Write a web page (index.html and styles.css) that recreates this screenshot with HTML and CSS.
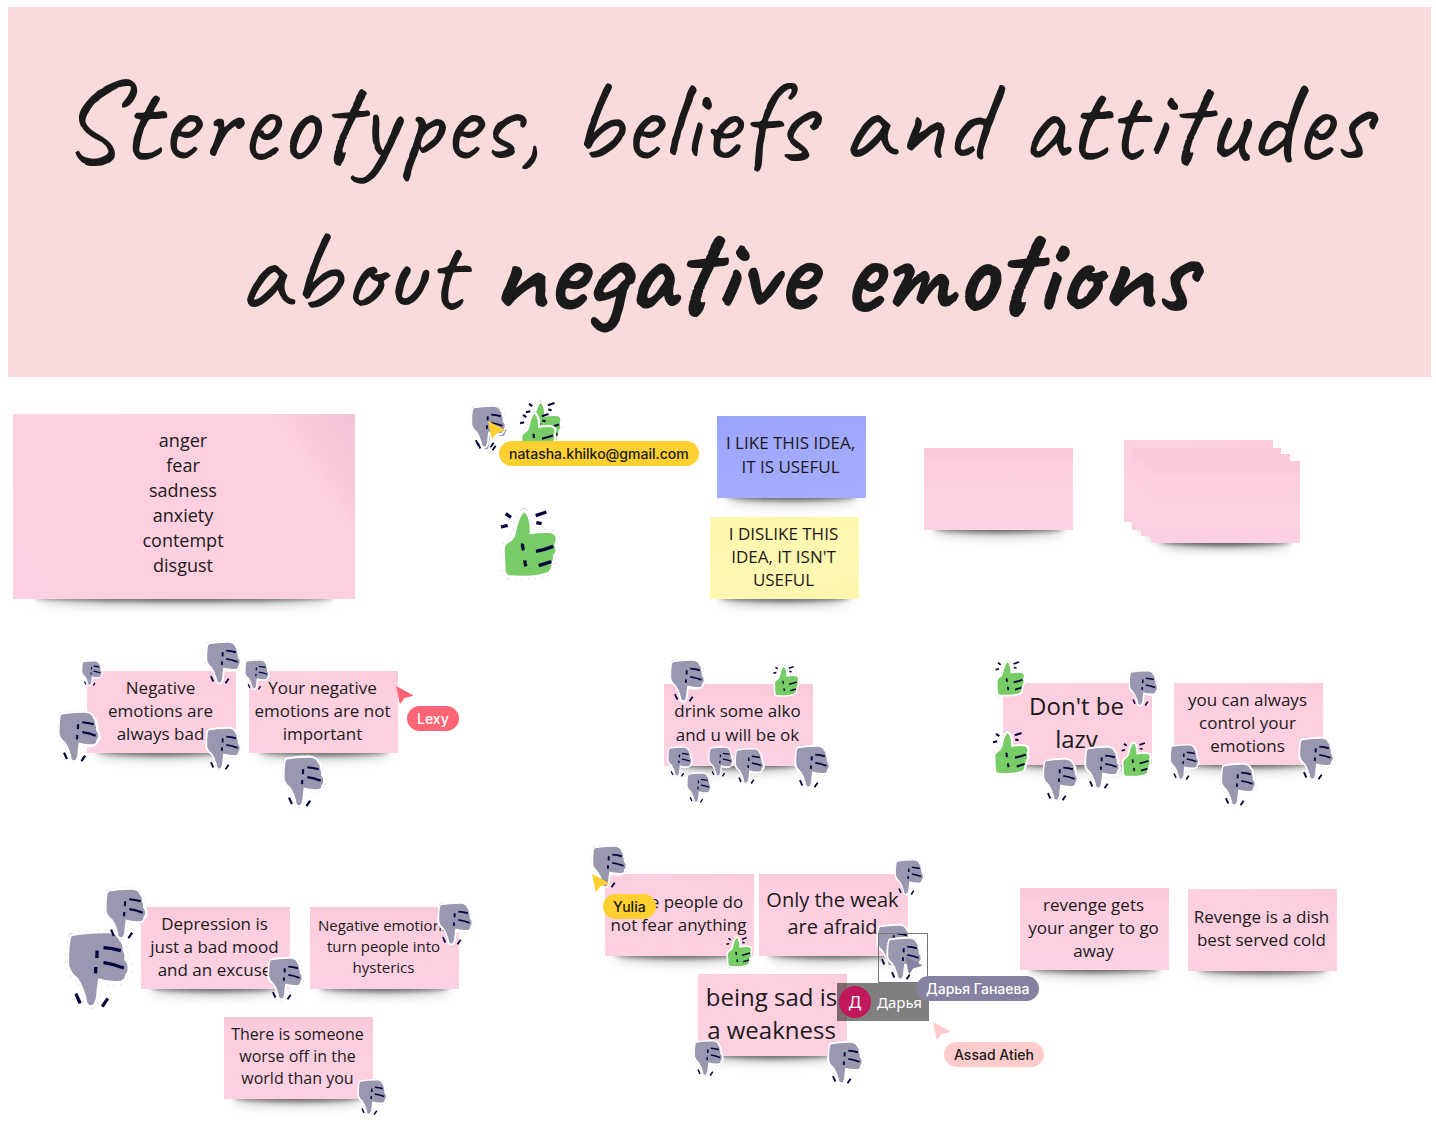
FILE: index.html
```html
<!DOCTYPE html>
<html lang="en">
<head>
<meta charset="utf-8">
<meta name="viewport" content="width=device-width, initial-scale=1">
<title>Stereotypes, beliefs and attitudes about negative emotions</title>
<link rel="stylesheet" href="styles.css">
</head>
<body>
<svg class="symbols" aria-hidden="true">
  <symbol id="down" viewBox="0 0 200 240">
    <path class="halo-edge" d="M22 20Q70 8 130 10Q157 15 164 35Q177 45 174 62Q181 75 179 92Q190 101 189 119Q190 128 180 134Q177 147 168 153Q128 164 100 147Q94 178 92 205Q86 227 77 226Q65 226 64 204Q57 166 40 144Q15 129 12 108Q11 53 22 20Z"/>
    <path class="halo" d="M22 20Q70 8 130 10Q157 15 164 35Q177 45 174 62Q181 75 179 92Q190 101 189 119Q190 128 180 134Q177 147 168 153Q128 164 100 147Q94 178 92 205Q86 227 77 226Q65 226 64 204Q57 166 40 144Q15 129 12 108Q11 53 22 20Z"/>
    <path class="hand-down" d="M22 18Q70 9 130 10Q157 12 162 32Q174 42 172 60Q180 72 177 90Q189 101 187 116Q189 125 180 132Q180 147 168 152Q132 156 99 145Q94 178 92 205Q86 227 77 226Q65 226 64 204Q54 166 38 144Q15 125 12 106Q11 53 17 25Z"/>
    <path class="ink" d="M115 53Q140 55 167 62M115 98Q145 102 176 114M96 62L95 84M92 111L91 130M32 191L45 220M128 205L111 230"/>
  </symbol>
  <symbol id="up" viewBox="0 0 180 210">
    <path class="halo-edge" d="M78 10Q90 18 94 45Q96 60 95 76Q135 70 160 73Q177 79 172 97Q167 107 171 117Q176 130 164 140Q168 153 157 163Q162 179 151 188Q120 201 70 200L33 199Q22 196 23 178L20 125Q20 107 31 102Q48 94 53 76Q62 26 78 10Z"/>
    <path class="halo" d="M78 10Q90 18 94 45Q96 60 95 76Q135 70 160 73Q177 79 172 97Q167 107 171 117Q176 130 164 140Q168 153 157 163Q162 179 151 188Q120 201 70 200L33 199Q22 196 23 178L20 125Q20 107 31 102Q48 94 53 76Q62 26 78 10Z"/>
    <path class="hand-up" d="M78 10Q90 18 94 45Q96 60 95 76Q135 70 160 73Q177 79 172 97Q167 107 171 117Q176 130 164 140Q168 153 157 163Q162 179 151 188Q120 201 70 200L33 199Q22 196 23 178L20 125Q20 107 31 102Q48 94 53 76Q62 26 78 10Z"/>
    <path class="ink" d="M74 104Q72 114 77 124M81 154Q80 163 84 172M114 127Q140 122 166 112M122 170L160 158M23 14L39 25M9 54L29 49M113 20L145 9M115 41L131 44"/>
  </symbol>
  <symbol id="pointer" viewBox="0 0 17 18">
    <path d="M1 0.5Q0 0 0.3 1.2L3.6 17Q4 18 4.8 17.2L8.4 12.2L16.4 10Q17.6 9.5 16.4 8.8Z"/>
  </symbol>
</svg>

<header class="banner">
  <h1>Stereotypes, beliefs and attitudes<br>about <strong>negative emotions</strong></h1>
</header>

<main class="board">
  <section class="note note-list"><p>anger<br>fear<br>sadness<br>anxiety<br>contempt<br>disgust</p></section>
  <section class="note blue note-like"><p>I LIKE THIS IDEA,<br>IT IS USEFUL</p></section>
  <section class="note yellow note-dislike"><p>I DISLIKE THIS<br>IDEA, IT ISN'T<br>USEFUL</p></section>
  <section class="note creased note-blank"></section>
  <section class="note note-pile-1"></section>
  <section class="note creased note-pile-2"></section>
  <section class="note creased note-pile-3"></section>
  <section class="note creased note-pile-4"></section>

  <section class="note note-bad"><p>Negative<br>emotions are<br>always bad</p></section>
  <section class="note note-important"><p>Your negative<br>emotions are not<br>important</p></section>
  <section class="note creased text-l note-drink"><p>drink some alko<br>and u will be ok</p></section>
  <section class="note text-xxl note-lazy"><p>Don't be<br>lazy</p></section>
  <section class="note note-control"><p>you can always<br>control your<br>emotions</p></section>

  <section class="note creased note-depression"><p>Depression is<br>just a bad mood<br>and an excuse</p></section>
  <section class="note creased text-s note-hysterics"><p>Negative emotions<br>turn people into<br>hysterics</p></section>
  <section class="note creased text-m note-worse"><p>There is someone<br>worse off in the<br>world than you</p></section>
  <section class="note note-fear"><p>Brave people do<br>not fear anything</p></section>
  <section class="note creased text-xl note-weak"><p>Only the weak<br>are afraid</p></section>
  <section class="note text-xxl note-sad"><p>being sad is<br>a weakness</p></section>
  <section class="note creased note-revenge"><p>revenge gets<br>your anger to go<br>away</p></section>
  <section class="note note-dish"><p>Revenge is a dish<br>best served cold</p></section>

  <svg class="down size-4 d31"><use href="#down"/></svg>
  <svg class="down size-4 d30"><use href="#down"/></svg>
  <svg class="up size-4 u8"><use href="#up"/></svg>
  <svg class="up size-4 u7"><use href="#up"/></svg>
  <svg class="up size-6 u1"><use href="#up"/></svg>

  <svg class="down size-1 d1"><use href="#down"/></svg>
  <svg class="down size-4 d2"><use href="#down"/></svg>
  <svg class="down size-5 d3"><use href="#down"/></svg>
  <svg class="down size-4 d4"><use href="#down"/></svg>
  <svg class="down size-2 d5"><use href="#down"/></svg>
  <svg class="down size-5 d6"><use href="#down"/></svg>

  <svg class="down size-4 d7"><use href="#down"/></svg>
  <svg class="down size-2 d8"><use href="#down"/></svg>
  <svg class="down size-2 d9"><use href="#down"/></svg>
  <svg class="down size-3 d10"><use href="#down"/></svg>
  <svg class="down size-4 d11"><use href="#down"/></svg>
  <svg class="down size-2 d12"><use href="#down"/></svg>
  <svg class="up size-2 u2"><use href="#up"/></svg>

  <svg class="down size-3 d13"><use href="#down"/></svg>
  <svg class="down size-3 d14"><use href="#down"/></svg>
  <svg class="down size-4 d15"><use href="#down"/></svg>
  <svg class="down size-4 d16"><use href="#down"/></svg>
  <svg class="down size-4 d17"><use href="#down"/></svg>
  <svg class="down size-4 d18"><use href="#down"/></svg>
  <svg class="up size-3 u3"><use href="#up"/></svg>
  <svg class="up size-4 u4"><use href="#up"/></svg>
  <svg class="up size-3 u5"><use href="#up"/></svg>

  <svg class="down size-6 d19"><use href="#down"/></svg>
  <svg class="down size-5 d20"><use href="#down"/></svg>
  <svg class="down size-4 d21"><use href="#down"/></svg>
  <svg class="down size-4 d22"><use href="#down"/></svg>
  <svg class="down size-3 d23"><use href="#down"/></svg>

  <svg class="down size-4 d24"><use href="#down"/></svg>
  <svg class="down size-3 d25"><use href="#down"/></svg>
  <svg class="down size-4 d26"><use href="#down"/></svg>
  <svg class="down size-4 d27"><use href="#down"/></svg>
  <svg class="down size-3 d28"><use href="#down"/></svg>
  <svg class="down size-4 d29"><use href="#down"/></svg>
  <svg class="up size-2 u6"><use href="#up"/></svg>

  <div class="selection"></div>
  <div class="editor"><span class="avatar">Д</span><span>Дарья</span></div>

  <div class="cursor natasha"><svg><use href="#pointer"/></svg><span>natasha.khilko@gmail.com</span></div>
  <div class="cursor lexy"><svg><use href="#pointer"/></svg><span>Lexy</span></div>
  <div class="cursor yulia"><svg><use href="#pointer"/></svg><span>Yulia</span></div>
  <div class="cursor darya"><svg><use href="#pointer"/></svg><span>Дарья Ганаева</span></div>
  <div class="cursor assad"><svg><use href="#pointer"/></svg><span>Assad Atieh</span></div>
</main>
</body>
</html>
```
FILE: styles.css
```css
* { box-sizing: border-box; }

body {
  margin: 0;
  padding: 7px 5px 0 8px;
  background: #fff;
  color: #1a1a1a;
  font-family: "Open Sans", "Noto Sans", sans-serif;
}

.symbols { position: absolute; width: 0; height: 0; }

.banner {
  padding: 40px 8px 30px 0;
  background: #f9dbdc;
}

h1 {
  margin: 0;
  color: #1a1a1a;
  font: 400 117px/150px "Caveat", "Lato", cursive;
  text-align: center;
}

h1 strong { font-weight: 700; }

/* Free canvas: its origin is the page's left edge, just below the banner. */
.board {
  position: relative;
  isolation: isolate;
  min-height: 754px;
  margin: 0 -5px 0 -8px;
}

/* Sticky notes */
.note {
  position: absolute;
  display: flex;
  align-items: center;
  justify-content: center;
  width: 149px;
  height: 82px;
  padding: 0 2px 4px 0;
  background: linear-gradient(200deg, #fbcbdd 0, #fecfdf 22%, #fecfdf 60%, #fdd1e3 100%);
  font-size: 17px;
  line-height: 23px;
  text-align: center;
  white-space: nowrap;
}

.note.creased {
  background: linear-gradient(180deg, #f9c8da 0, #fccbdd 15%, #fecedf 20%, #fdd1e3 100%);
}

.note::before {
  content: "";
  position: absolute;
  z-index: -1;
  right: 6%;
  bottom: 4px;
  left: 6%;
  height: 10px;
  border-radius: 50%;
  box-shadow: 0 7px 5px rgba(0, 0, 0, 0.55), 0 12px 10px rgba(0, 0, 0, 0.18);
}

.note p { margin: 0; }
.note.blue { background: linear-gradient(170deg, #9aa3fb, #a1a9ff 40%, #a6adff); }
.note.yellow { background: linear-gradient(170deg, #fef6ac, #fff8b2 70%, #fdf5ab); }

.text-s { font-size: 15px; line-height: 21px; }
.text-m { font-size: 16px; line-height: 22px; }
.text-l { line-height: 24px; }
.text-xl { font-size: 20px; line-height: 27px; }
.text-xxl { font-size: 24px; line-height: 33px; }

.note-list {
  left: 13px; top: 37px; width: 342px; height: 185px;
  padding-bottom: 8px;
  background: linear-gradient(237deg, #f5c3d7 0, #f9c8da 12%, #fecfdf 17%, #fecfdf 50%, #fdd1e3 100%);
  font-size: 18px;
  line-height: 25px;
}
.note-like { left: 717px; top: 39px; line-height: 24px; }
.note-dislike { left: 710px; top: 140px; }
.note-blank { left: 924px; top: 71px; }
.note-pile-1 { left: 1124px; top: 63px; }
.note-pile-2 { left: 1132px; top: 71px; }
.note-pile-3 { left: 1141px; top: 77px; }
.note-pile-4 { left: 1151px; top: 84px; }
.note-bad { left: 87px; top: 294px; }
.note-important { left: 249px; top: 294px; }
.note-drink { left: 664px; top: 307px; }
.note-lazy { left: 1003px; top: 306px; }
.note-control { left: 1174px; top: 306px; }
.note-depression { left: 141px; top: 530px; }
.note-hysterics { left: 310px; top: 530px; }
.note-worse { left: 224px; top: 640px; }
.note-fear { left: 605px; top: 497px; }
.note-weak { left: 759px; top: 497px; }
.note-sad { left: 698px; top: 597px; }
.note-revenge { left: 1020px; top: 511px; }
.note-dish { left: 1188px; top: 512px; }

/* Thumb stickers */
.down, .up { position: absolute; overflow: visible; }
.down.size-1 { width: 22px; height: 27px; }
.down.size-2 { width: 26px; height: 32px; }
.down.size-3 { width: 31px; height: 37px; }
.down.size-4 { width: 37px; height: 46px; }
.down.size-5 { width: 44px; height: 54px; }
.down.size-6 { width: 67px; height: 80px; }
.up.size-2 { width: 27px; height: 32px; }
.up.size-3 { width: 31px; height: 37px; }
.up.size-4 { width: 38px; height: 44px; }
.up.size-6 { width: 60px; height: 70px; }

symbol { overflow: visible; }
.halo-edge { fill: none; stroke: #d2d2d8; stroke-width: 24; stroke-dasharray: 5 14; }
.halo { fill: none; stroke: #fff; stroke-width: 20; stroke-linejoin: round; }
.hand-down { fill: #9a98b0; }
.hand-up { fill: #77cc66; }
.ink { fill: none; stroke: #05053d; stroke-width: 10; }

.d1 { left: 81px; top: 283px; }
.d2 { left: 205px; top: 263px; }
.d3 { left: 57px; top: 333px; }
.d4 { left: 205px; top: 349px; }
.d5 { left: 244px; top: 282px; }
.d6 { left: 282px; top: 378px; }
.d7 { left: 669px; top: 281px; }
.d8 { left: 667px; top: 369px; }
.d9 { left: 708px; top: 369px; }
.d10 { left: 734px; top: 371px; }
.d11 { left: 794px; top: 367px; }
.d12 { left: 686px; top: 395px; }
.d13 { left: 1128px; top: 293px; }
.d14 { left: 1169px; top: 367px; }
.d15 { left: 1220px; top: 385px; }
.d16 { left: 1298px; top: 359px; }
.d17 { left: 1084px; top: 368px; }
.d18 { left: 1042px; top: 380px; }
.d19 { left: 65px; top: 553px; }
.d20 { left: 104px; top: 510px; }
.d21 { left: 267px; top: 579px; }
.d22 { left: 437px; top: 524px; }
.d23 { left: 357px; top: 702px; }
.d24 { left: 591px; top: 467px; }
.d25 { left: 894px; top: 482px; }
.d26 { left: 876px; top: 546px; }
.d27 { left: 886px; top: 559px; }
.d28 { left: 693px; top: 663px; }
.d29 { left: 827px; top: 663px; }
.d30 { left: 470px; top: 27px; }
.d31 { left: 472px; top: 30px; }
.u1 { left: 498px; top: 132px; }
.u2 { left: 772px; top: 288px; }
.u3 { left: 994px; top: 283px; }
.u4 { left: 991px; top: 354px; }
.u5 { left: 1120px; top: 364px; }
.u6 { left: 725px; top: 559px; }
.u7 { left: 518px; top: 35px; }
.u8 { left: 524px; top: 24px; }

/* Sticker being moved by a collaborator */
.selection {
  position: absolute;
  left: 878px; top: 556px;
  width: 50px; height: 50px;
  border: 1px solid #777;
}

.editor {
  position: absolute;
  left: 837px; top: 606px;
  display: flex;
  align-items: center;
  gap: 6px;
  height: 38px;
  padding: 0 7px 0 2px;
  background: rgba(0, 0, 0, 0.5);
  color: #fff;
  font: 400 15px/24px "Noto Sans", sans-serif;
}

.avatar {
  width: 32px;
  height: 32px;
  border-radius: 50%;
  background: #c2185b;
  font-size: 17px;
  line-height: 32px;
  text-align: center;
}

/* Live cursors with name labels */
.cursor {
  --tone: #ffd02f;
  position: absolute;
  color: #1a1a1a;
  font: 500 14px/25px "Inter", sans-serif;
  white-space: nowrap;
}

.cursor svg {
  display: block;
  width: 17px;
  height: 18px;
  fill: var(--tone);
}

.cursor span {
  display: block;
  margin: 2px 0 0 11px;
  padding: 0 10px;
  border-radius: 13px;
  background: var(--tone);
}

.natasha { left: 488px; top: 44px; }
.lexy { --tone: #ff6575; left: 396px; top: 309px; color: #fff; }
.yulia { left: 592px; top: 497px; }
.darya { --tone: #8581a0; left: 905px; top: 579px; color: #fff; }
.assad { --tone: #ffcccb; left: 933px; top: 645px; }
```
